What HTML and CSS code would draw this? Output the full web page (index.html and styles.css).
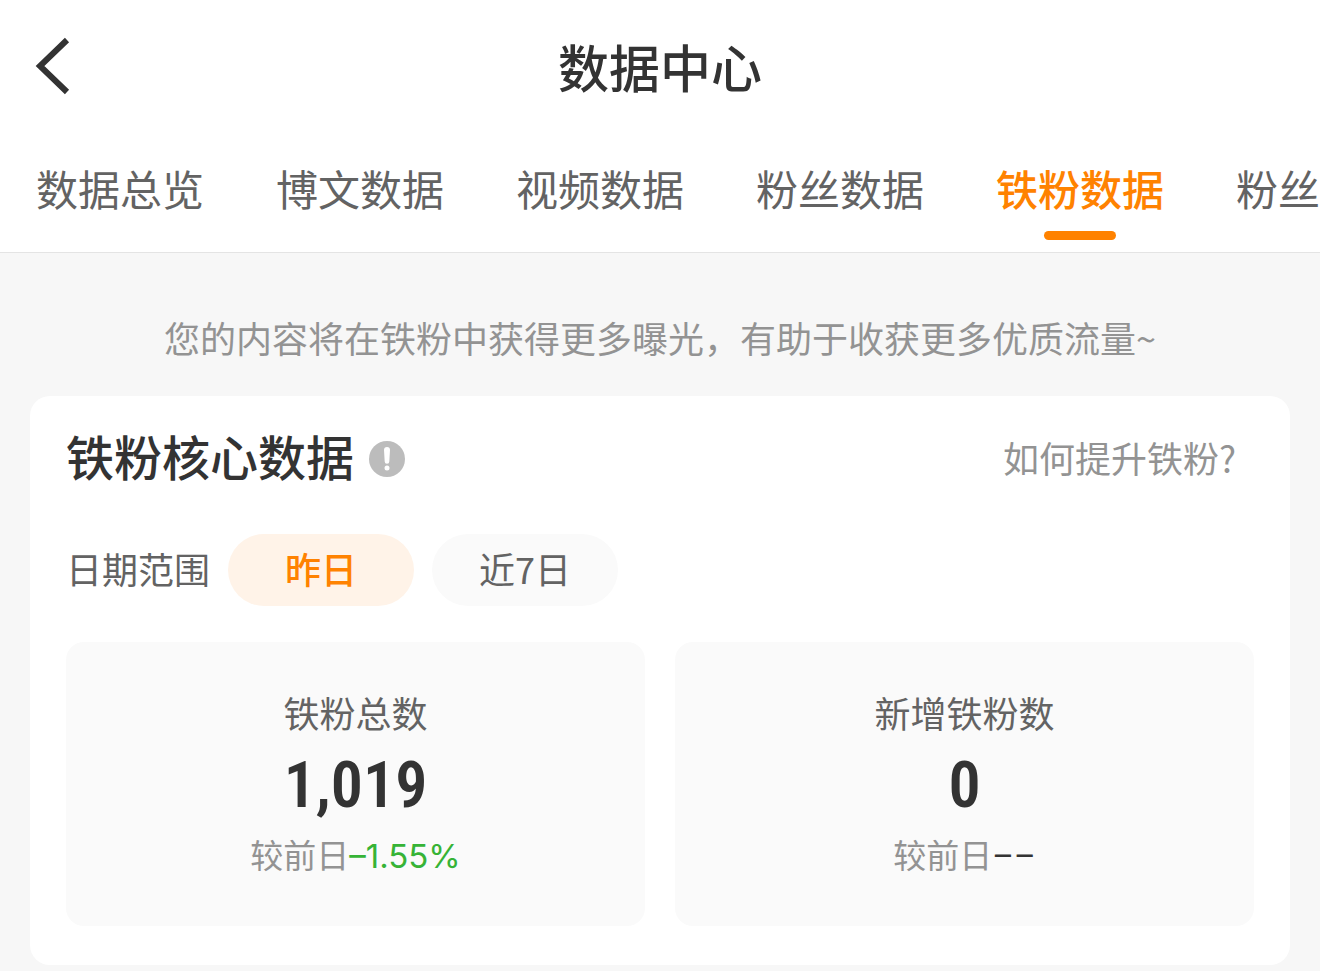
FILE: index.html
```html
<!DOCTYPE html>
<html lang="zh-CN">
<head>
<meta charset="utf-8">
<meta name="viewport" content="width=device-width, initial-scale=1">
<title>数据中心</title>
<link rel="stylesheet" href="styles.css">
</head>
<body>
<header class="topbar">
  <button class="back" type="button" aria-label="返回">
    <svg viewBox="0 0 36 60" width="36" height="60" aria-hidden="true"><path d="M33 4 L6 30 L33 56" fill="none" stroke="#333" stroke-width="6"/></svg>
  </button>
  <h1 class="title">数据中心</h1>
</header>
<nav class="tabs">
  <a class="tab" href="#overview">数据总览</a>
  <a class="tab" href="#posts">博文数据</a>
  <a class="tab" href="#video">视频数据</a>
  <a class="tab" href="#fans">粉丝数据</a>
  <a class="tab tab-active" href="#iron" aria-current="page">铁粉数据</a>
  <a class="tab" href="#more">粉丝</a>
</nav>
<main class="content">
  <p class="hint">您的内容将在铁粉中获得更多曝光，有助于收获更多优质流量~</p>
  <section class="card">
    <div class="card-head">
      <h2 class="card-title">铁粉核心数据</h2>
      <button class="info" type="button" aria-label="说明">
        <svg viewBox="0 0 36 36" width="36" height="36" aria-hidden="true"><circle cx="18" cy="18" r="18" fill="#bcbcbc"/><path d="M15 9a3 3 0 0 1 6 0l-.7 11.400a2.300 2.300 0 0 1-4.600 0z" fill="#fff"/><circle cx="18" cy="27" r="2.500" fill="#fff"/></svg>
      </button>
      <a class="help" href="#help">如何提升铁粉?</a>
    </div>
    <div class="range">
      <span class="range-label">日期范围</span>
      <button class="pill pill-active" type="button" aria-pressed="true">昨日</button>
      <button class="pill" type="button" aria-pressed="false">近7日</button>
    </div>
    <div class="stats">
      <div class="stat">
        <p class="stat-name">铁粉总数</p>
        <p class="stat-value">1,019</p>
        <p class="stat-diff">较前日<span class="down">–1.55%</span></p>
      </div>
      <div class="stat">
        <p class="stat-name">新增铁粉数</p>
        <p class="stat-value">0</p>
        <p class="stat-diff">较前日<span class="none">––</span></p>
      </div>
    </div>
  </section>
</main>
</body>
</html>
```
FILE: styles.css
```css
* {
  box-sizing: border-box;
}

body {
  margin: 0;
  background: #f7f7f7;
  color: #333;
  font-family: "Noto Sans CJK SC", sans-serif;
  overflow-x: hidden;
}

h1, h2, p {
  margin: 0;
}

button {
  border: 0;
  padding: 0;
  background: none;
  color: inherit;
  font: inherit;
  cursor: pointer;
}

a {
  color: inherit;
  text-decoration: none;
}

.topbar {
  display: grid;
  grid-template-columns: 1fr auto 1fr;
  align-items: center;
  height: 138px;
  padding: 0 34px 6px;
  background: #fff;
}

.back {
  display: flex;
  justify-self: start;
}

.title {
  font-size: 51px;
  line-height: 72px;
  font-weight: 500;
}

.tabs {
  display: flex;
  gap: 72px;
  overflow: hidden;
  padding: 20px 0 12px 36px;
  border-bottom: 1px solid #e4e4e4;
  background: #fff;
  color: #636363;
}

.tab {
  display: flex;
  flex: none;
  flex-direction: column;
  align-items: center;
  gap: 13px;
  font-size: 42px;
  line-height: 60px;
  white-space: nowrap;
}

.tab::after {
  content: "";
  width: 72px;
  height: 9px;
  border-radius: 5px;
}

.tab-active {
  color: #ff8200;
  font-weight: 500;
}

.tab-active::after {
  background: #ff8200;
}

.content {
  padding: 58px 30px 6px;
}

.hint {
  margin-bottom: 32px;
  color: #939393;
  font-size: 36px;
  line-height: 53px;
  text-align: center;
}

.card {
  padding: 26px 36px 39px;
  border-radius: 20px;
  background: #fff;
}

.card-head {
  display: flex;
  align-items: center;
  padding-right: 18px;
}

.card-title {
  padding-bottom: 8px;
  font-size: 48px;
  line-height: 66px;
  font-weight: 500;
}

.info {
  display: flex;
  margin-left: 15px;
}

.help {
  margin-left: auto;
  padding-bottom: 4px;
  color: #939393;
  font-size: 36px;
  line-height: 54px;
}

.range {
  display: flex;
  align-items: center;
  gap: 18px;
  margin: 38px 0 36px;
  color: #636363;
  font-size: 36px;
}

.range-label {
  padding-bottom: 4px;
}

.pill {
  width: 186px;
  height: 72px;
  padding-bottom: 4px;
  border-radius: 36px;
  background: #fafafa;
}

.pill-active {
  background: #fff3e8;
  color: #ff8200;
  font-weight: 500;
}

.stats {
  display: grid;
  grid-template-columns: 1fr 1fr;
  gap: 30px;
}

.stat {
  padding: 43px 18px 44px;
  border-radius: 18px;
  background: #fafafa;
  text-align: center;
}

.stat-name {
  color: #636363;
  font-size: 36px;
  line-height: 54px;
}

.stat-value {
  padding-top: 2px;
  font-family: "Roboto Condensed", "Liberation Sans Narrow", sans-serif;
  font-size: 64px;
  line-height: 90px;
  font-weight: 600;
}

.stat-diff {
  color: #939393;
  font-family: Inter, "Noto Sans CJK SC", sans-serif;
  font-size: 33px;
  line-height: 50px;
}

.down {
  color: #36b336;
}

.none {
  color: #333;
  font-family: Roboto, sans-serif;
}
```
